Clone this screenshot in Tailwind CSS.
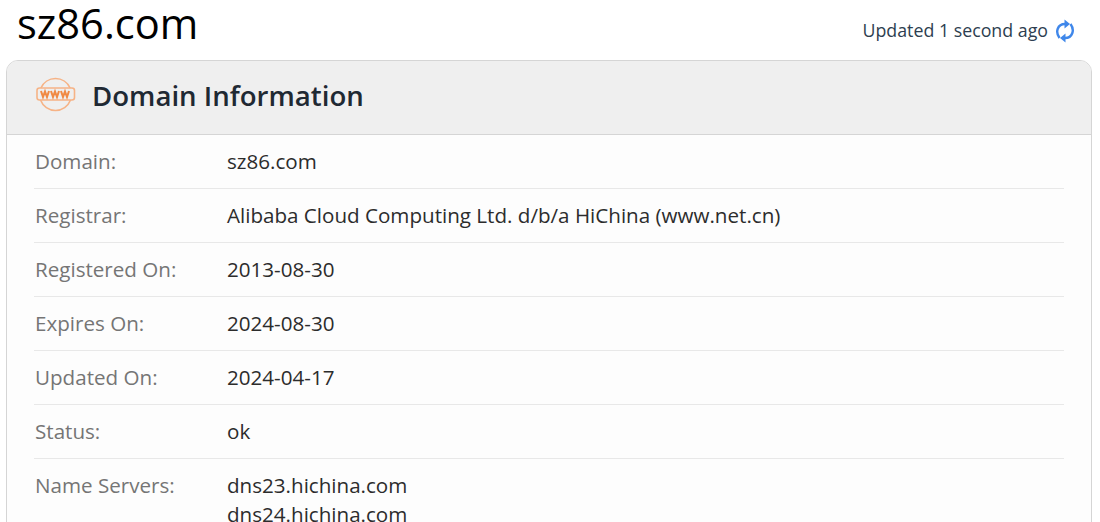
<!DOCTYPE html>
<html lang="en">
<head>
    <meta charset="UTF-8">
    <title>sz86.com</title>
    <script src="https://cdn.jsdelivr.net/npm/@tailwindcss/browser@4"></script>
</head>
<body class="bg-white h-[522px] overflow-hidden font-['Open_Sans',sans-serif]">
    <!-- Top line -->
    <div class="h-[60px] pl-[17px] pr-[25px] flex justify-between">
        <h1 class="text-[41.6px] leading-[46px] text-black">sz86.com</h1>
        <div class="flex items-center gap-[7px] h-[61px] text-[17.8px] text-[#2d3e50]">
            <span>Updated 1 second ago</span>
            <svg class="w-[20px] h-[24px]" viewBox="0 0 20 24" fill="none" stroke="#3f87ea" stroke-width="2.4">
                <path d="M4.500 19C0 13 2.500 5 10 5"/>
                <path d="M15.500 5C20 11 17.500 19 10 19"/>
                <path d="M9.500 0.500L15 5L9.500 9.500Z" fill="#3f87ea" stroke="none"/>
                <path d="M10.500 14.500L5 19L10.500 23.500Z" fill="#3f87ea" stroke="none"/>
            </svg>
        </div>
    </div>

    <!-- Card -->
    <div class="ml-[6px] w-[1086px] rounded-t-[12px] border border-[#d5d5d5] bg-[#fdfdfd]">
        <div class="h-[74px] bg-[#efefef] border-b border-[#d5d5d5] rounded-t-[11px] flex pl-[29px] pt-[16px] gap-[16px]">
            <svg class="w-[40px] h-[35px]" viewBox="0 0 40 35" fill="none" stroke="#f6b386" stroke-width="1.600">
                <path d="M4.900 11A16 16 0 0 1 34.100 11"/>
                <path d="M4.500 23A16 16 0 0 0 34.500 23"/>
                <rect x="1" y="11" width="37.500" height="12" rx="2.500"/>
                <path d="M5 14L7 20L9 14.500L11 20L13 14M15 14L17 20L19 14.500L21 20L23 14M25 14L27 20L29 14.500L31 20L33 14" stroke-width="2" stroke="#f08a45"/>
            </svg>
            <h2 class="text-[27.6px] leading-[36px] font-semibold text-[#1f2933]">Domain Information</h2>
        </div>
        <dl class="ml-[27px] mr-[27px] text-[20.6px] leading-[29px]">
            <div class="flex h-[54px] pt-[12px] border-b border-[#e8e8e8]">
                <dt class="w-[193px] pl-[1px] text-[#757575]">Domain:</dt>
                <dd class="text-[#2c2c2c]">sz86.com</dd>
            </div>
            <div class="flex h-[54px] pt-[12px] border-b border-[#e8e8e8]">
                <dt class="w-[193px] pl-[1px] text-[#757575]">Registrar:</dt>
                <dd class="text-[#2c2c2c]">Alibaba Cloud Computing Ltd. d/b/a HiChina (www.net.cn)</dd>
            </div>
            <div class="flex h-[54px] pt-[12px] border-b border-[#e8e8e8]">
                <dt class="w-[193px] pl-[1px] text-[#757575]">Registered On:</dt>
                <dd class="text-[#2c2c2c]">2013-08-30</dd>
            </div>
            <div class="flex h-[54px] pt-[12px] border-b border-[#e8e8e8]">
                <dt class="w-[193px] pl-[1px] text-[#757575]">Expires On:</dt>
                <dd class="text-[#2c2c2c]">2024-08-30</dd>
            </div>
            <div class="flex h-[54px] pt-[12px] border-b border-[#e8e8e8]">
                <dt class="w-[193px] pl-[1px] text-[#757575]">Updated On:</dt>
                <dd class="text-[#2c2c2c]">2024-04-17</dd>
            </div>
            <div class="flex h-[54px] pt-[12px] border-b border-[#e8e8e8]">
                <dt class="w-[193px] pl-[1px] text-[#757575]">Status:</dt>
                <dd class="text-[#2c2c2c]">ok</dd>
            </div>
            <div class="flex pt-[12px]">
                <dt class="w-[193px] pl-[1px] text-[#757575]">Name Servers:</dt>
                <dd class="text-[#2c2c2c]">dns23.hichina.com<br>dns24.hichina.com</dd>
            </div>
        </dl>
    </div>
</body>
</html>
